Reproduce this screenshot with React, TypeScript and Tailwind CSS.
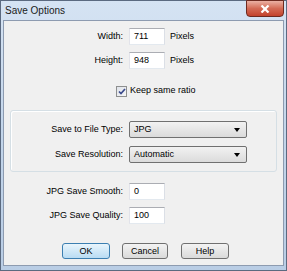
import React from 'react';

const FONT = { fontFamily: '"Liberation Sans", Arial, sans-serif' };

function Field({ label, value, suffix }: { label: string; value: string; suffix?: string }) {
  return (
    <div className="flex items-center h-[17px]">
      <div className="w-[120px] text-right text-[9px] text-black pr-[1px]">{label}</div>
      <div className="ml-[5px] w-[36px] h-[17px] border border-[#abadb3] border-l-[#e2e3ea] border-b-[#e3e9ef] border-r-[#dbdfe6] bg-white text-[9px] leading-[15px] pl-[4px] text-black">
        {value}
      </div>
      {suffix && <div className="ml-[5px] text-[9px] text-black">{suffix}</div>}
    </div>
  );
}

function Combo({ label, value }: { label: string; value: string }) {
  return (
    <div className="flex items-center h-[17px]">
      <div className="w-[120px] text-right text-[9px] text-black pr-[1px]">{label}</div>
      <div className="ml-[5px] w-[118px] h-[17px] flex items-center border border-[#707070] rounded-[2px] bg-gradient-to-b from-[#f2f2f2] to-[#dbdbdb] pl-[4px] pr-[6px] text-[9px] text-black">
        <span className="flex-1">{value}</span>
        <svg width="6" height="4" viewBox="0 0 6 4" aria-hidden="true">
          <path d="M0 0h6L3 4z" fill="#000" />
        </svg>
      </div>
    </div>
  );
}

function Btn({ label, width, primary = false }: { label: string; width: string; primary?: boolean }) {
  return (
    <button
      type="button"
      className={`${width} h-[16px] rounded-[3px] border text-[9px] leading-[14px] text-black ${
        primary
          ? 'border-[#3c7fb1] bg-gradient-to-b from-[#e9f5fc] to-[#b9dcf3]'
          : 'border-[#707070] bg-gradient-to-b from-[#f3f3f3] to-[#dadada]'
      }`}
    >
      {label}
    </button>
  );
}

export default function App() {
  return (
    <div
      style={FONT}
      className="w-[287px] h-[271px] flex flex-col border border-[#5b6a80] bg-gradient-to-b from-[#d5e3f3] via-[#c3d5ea] to-[#b9cde5]"
    >
      {/* Title bar */}
      <div className="h-[19px] flex items-start">
        <div className="pl-[4px] pt-[3px] text-[10px] leading-[13px] text-[#1a1a1a]">Save Options</div>
        <div className="ml-auto mr-[2px] w-[38px] h-[17px] -mt-px flex items-center justify-center rounded-b-[4px] border border-[#6d2a20] bg-gradient-to-b from-[#eab0a3] via-[#d36a55] to-[#c2422c]">
          <svg width="10" height="8" viewBox="0 0 10 8" aria-hidden="true">
            <path d="M1.5 0.5l7 7M8.5 0.5l-7 7" stroke="#fff" strokeWidth="2.2" />
          </svg>
        </div>
      </div>

      {/* Client area */}
      <div className="flex-1 mx-[2px] mb-[4px] border border-[#8d9bb0] bg-[#f0f0f0] flex flex-col">
        <div className="mt-[7px]">
          <Field label="Width:" value="711" suffix="Pixels" />
        </div>
        <div className="mt-[7px]">
          <Field label="Height:" value="948" suffix="Pixels" />
        </div>

        <div className="mt-[16px] flex items-center h-[12px] pl-[112px]">
          <div className="w-[11px] h-[11px] border border-[#8e8f8f] bg-gradient-to-br from-[#dfe3ea] to-[#f6f6f6] flex items-center justify-center">
            <svg width="8" height="7" viewBox="0 0 8 7" aria-hidden="true">
              <path d="M1 3.5l2 2L7 1" fill="none" stroke="#3b4a8c" strokeWidth="1.7" />
            </svg>
          </div>
          <span className="ml-[3px] text-[9px] text-black">Keep same ratio</span>
        </div>

        <div className="mt-[13px] mx-[6px] h-[62px] border border-[#d5dfe5] rounded-[3px] shadow-[inset_1px_1px_0_#fff] flex flex-col">
          <div className="mt-[10px] -ml-[7px]">
            <Combo label="Save to File Type:" value="JPG" />
          </div>
          <div className="mt-[8px] -ml-[7px]">
            <Combo label="Save Resolution:" value="Automatic" />
          </div>
        </div>

        <div className="mt-[11px]">
          <Field label="JPG Save Smooth:" value="0" />
        </div>
        <div className="mt-[7px]">
          <Field label="JPG Save Quality:" value="100" />
        </div>

        <div className="mt-[19px] flex items-start pl-[58px]">
          <Btn label="OK" width="w-[48px]" primary />
          <div className="ml-[12px] flex">
            <Btn label="Cancel" width="w-[46px]" />
          </div>
          <div className="ml-[13px] flex">
            <Btn label="Help" width="w-[48px]" />
          </div>
        </div>
      </div>
    </div>
  );
}
